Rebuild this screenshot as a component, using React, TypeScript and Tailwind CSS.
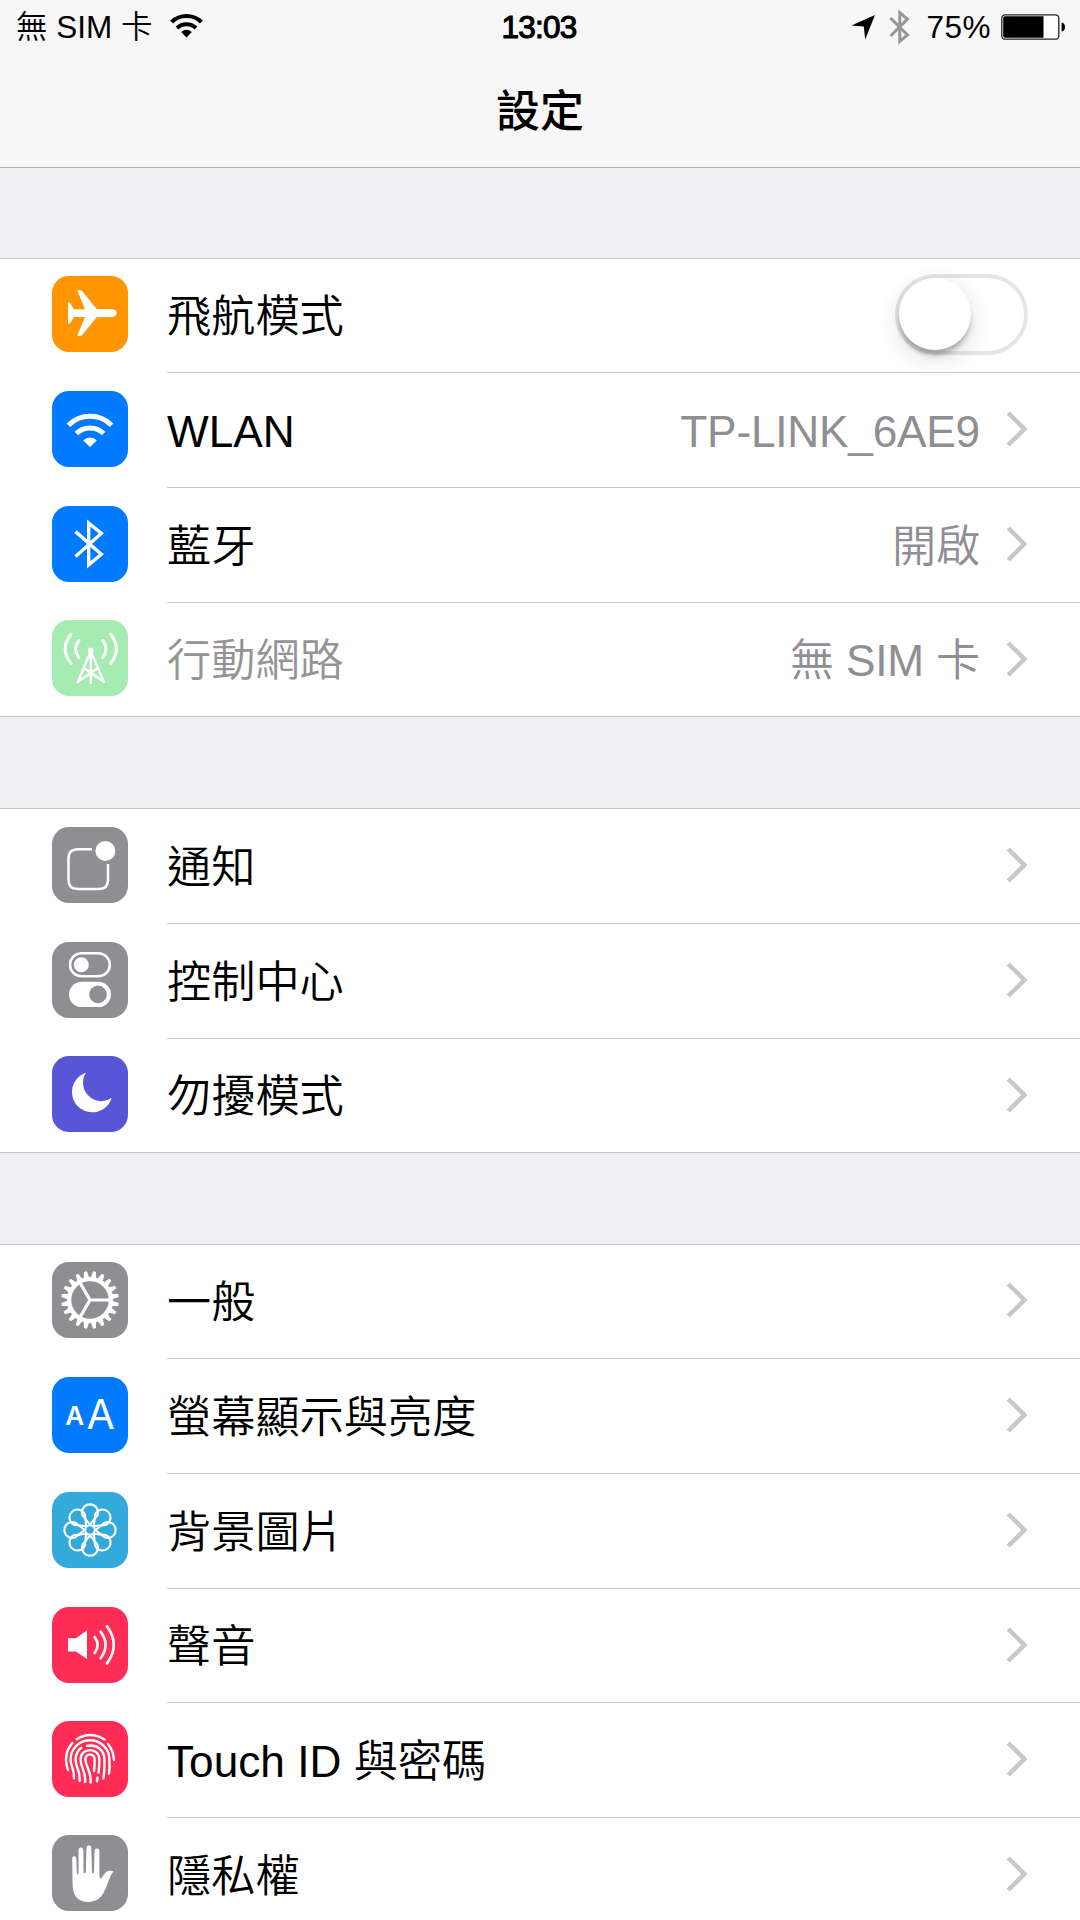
import React from 'react';
import { clsx } from 'clsx';

interface SettingsRow {
  id: string;
  label: string;
  iconBg: string;
  icon: React.ReactNode;
  value?: string;
  toggle?: boolean;
  disabled?: boolean;
}

const petals = [0, 45, 90, 135, 180, 225, 270, 315];
const teeth = Array.from({ length: 20 }, (_, i) => i * 18 + 9);

/* Row icons, all drawn on a 76x76 tile */

const AirplaneIcon = () => (
  <path
    fill="#fff"
    d="M16 26 L17.8 26.4 L22 33.2 H33 L25.3 14.6 Q27.5 13.6 29.7 14.6 L44.7 32.9 L60.7 33.2 Q64.7 34 64.7 37 Q64.7 40 60.7 40.9 L44.7 41.2 L29.7 59.5 Q27.5 60.4 25.3 59.5 L33 41 H22 L17.8 47.4 L16 47.8 Z"
  />
);

const WlanIcon = () => (
  <>
    <g fill="none" stroke="#fff" strokeWidth="5">
      <path d="M16.4 34.2 A30.5 30.5 0 0 1 59.6 34.2" />
      <path d="M24.3 42.6 A19.3 19.3 0 0 1 51.7 42.6" />
    </g>
    <path fill="#fff" d="M38 56 L31.2 49.4 A9.7 9.7 0 0 1 44.8 49.4 Z" />
  </>
);

const BluetoothIcon = () => (
  <path
    fill="none"
    stroke="#fff"
    strokeWidth="3.4"
    d="M23.5 25.6 L49.3 48.2 L36.7 58.8 V17 L49.3 27.4 L23.5 50.4"
  />
);

const CellularIcon = () => (
  <g fill="none" stroke="#fff" strokeWidth="3" strokeLinecap="round">
    <path d="M27 20.3 Q20.2 28.8 27 37.6" />
    <path d="M50.6 20.3 Q57.4 28.8 50.6 37.6" />
    <path d="M19 14.3 Q7.4 29 19 43.4" />
    <path d="M58.6 14.3 Q70.2 29 58.6 43.4" />
    <circle cx="38.8" cy="30.4" r="2.8" fill="#fff" stroke="none" />
    <g strokeWidth="2.4" strokeLinecap="butt">
      <path d="M38.8 31 L25.4 63" />
      <path d="M38.8 31 L52.2 63" />
      <path d="M38.8 31 V64" />
      <path d="M25.4 62 L45.4 48.2 M52.2 62 L32.2 48.2" />
    </g>
  </g>
);

const NotificationIcon = () => (
  <>
    <path
      fill="none"
      stroke="#fff"
      strokeWidth="2.5"
      d="M40 22.3 H26 Q16.5 22.3 16.5 31.5 V53 Q16.5 62 25.5 62 H47 Q56 62 56 53 V37"
    />
    <circle cx="53.4" cy="24" r="10" fill="#fff" />
  </>
);

const ControlCenterIcon = () => (
  <>
    <rect x="18" y="11.2" width="39.8" height="23" rx="11.5" fill="none" stroke="#fff" strokeWidth="2.6" />
    <circle cx="29.3" cy="22.8" r="7.5" fill="#fff" />
    <rect x="17" y="39.7" width="42" height="25.4" rx="12.7" fill="#fff" />
    <circle cx="46" cy="52.4" r="8.8" fill="#8e8e93" />
  </>
);

const MoonIcon = () => (
  <path fill="#fff" d="M34 16.7 A20.3 20.3 0 1 0 59.7 42 A18.4 18.4 0 0 1 34 16.7 Z" />
);

const GearIcon = () => (
  <>
    {teeth.map((deg) => (
      <path key={deg} transform={`rotate(${deg} 38 38)`} fill="#fff" d="M34.9 17.4 L36.6 9.2 H39.4 L41.1 17.4 Z" />
    ))}
    <g fill="none" stroke="#fff">
      <circle cx="38" cy="38" r="20.9" strokeWidth="4.4" />
      <path strokeWidth="3.2" d="M38 38 H58 M38 38 L28 20.7 M38 38 L28 55.3" />
    </g>
  </>
);

const DisplayIcon = () => (
  <g fill="#fff" fontFamily="Inter, 'Liberation Sans', sans-serif">
    <text x="13.2" y="48.3" fontSize="26" fontWeight="600" textLength="19" lengthAdjust="spacingAndGlyphs">A</text>
    <text x="34.5" y="52" fontSize="41" fontWeight="400" textLength="28.4" lengthAdjust="spacingAndGlyphs">A</text>
  </g>
);

const WallpaperIcon = () => (
  <g fill="none" stroke="#fff" strokeWidth="2.1">
    {petals.map((deg) => (
      <path
        key={deg}
        transform={`translate(38 38) rotate(${deg})`}
        d="M0 -5.4 L-7.4 -14.6 A8 8 0 1 1 7.4 -14.6 Z"
      />
    ))}
    <circle cx="38" cy="38" r="4.8" fill="#34aadc" />
  </g>
);

const SoundIcon = () => (
  <>
    <path fill="#fff" d="M16 31.2 H24 L35 23.2 V52 L24 44.4 H16 Z" />
    <g fill="none" stroke="#fff" strokeWidth="2.7" strokeLinecap="round">
      <path d="M42.6 30 Q48.8 38 42.6 46" />
      <path d="M48.6 24.6 Q58.6 38 48.6 51.2" />
      <path d="M55 19.4 Q68.6 38 55 56.4" />
    </g>
  </>
);

const TouchIdIcon = () => (
  <g fill="none" stroke="#fff" strokeWidth="2.4" strokeLinecap="round">
    <path d="M20.4 22 Q10.6 33 16 49" />
    <path d="M24.6 18.2 Q38.5 9.6 52.6 18.6" />
    <path d="M56 23 Q61.6 30 62 39" />
    <path d="M22 57.4 C22.4 46 18.6 46.5 18.6 38.5 A19.4 19.2 0 0 1 57.4 38.5 C57.6 43 58 47 57 52.6" />
    <path d="M27.6 60 C28.6 48 23.6 48.5 23.6 38.5 Q23.6 31 29.4 26.8" />
    <path d="M35 24.9 C45 22.6 52.4 29.5 52.4 38.5 C52.4 47 52.6 51 51.4 57.4" />
    <path d="M33 61 C34.2 49 28.6 48 28.6 38.5 C28.6 26 47.4 26 47.4 38.5 C47.4 43 47.2 46 46.6 51.6" />
    <path d="M38.6 61.6 C39.4 49 33.4 46 33.4 38.5 C33.4 31.8 42.6 31.8 42.6 38.5 C42.6 42 42.4 47 42 50" />
    <path d="M45.6 56.6 L45 60.2" />
  </g>
);

const HandIcon = () => (
  <path
    fill="#fff"
    d="M20.2 23.4 Q20.2 21.2 22.2 21.2 Q24.3 21.2 24.3 23.4 L24.9 39 Q25.6 39.8 26.5 39 V15 Q26.5 12.6 28.9 12.6 Q31.3 12.6 31.3 15 L31.6 37.6 Q32.6 38.8 33.8 37.6 L34.5 13 Q34.5 10.6 36.9 10.6 Q39.3 10.6 39.3 13 L40 37.6 Q41 38.8 42 37.6 L42.5 16 Q42.5 13.6 44.9 13.6 Q47.4 13.6 47.4 16 V41 Q47.4 43.8 49.4 43.6 Q53 36 57 35.7 Q60.4 35.4 61.4 36.4 Q58.6 39.6 57 44.4 Q52.6 57.6 49 61.6 Q44.4 67 36.6 67 Q21.6 67 20.6 51 Z"
  />
);

const sections: SettingsRow[][] = [
  [
    { id: 'airplane', label: '飛航模式', iconBg: 'bg-[#ff9500]', icon: <AirplaneIcon />, toggle: true },
    { id: 'wlan', label: 'WLAN', iconBg: 'bg-[#007aff]', icon: <WlanIcon />, value: 'TP-LINK_6AE9' },
    { id: 'bluetooth', label: '藍牙', iconBg: 'bg-[#007aff]', icon: <BluetoothIcon />, value: '開啟' },
    { id: 'cellular', label: '行動網路', iconBg: 'bg-[#a6ebb1]', icon: <CellularIcon />, value: '無 SIM 卡', disabled: true },
  ],
  [
    { id: 'notifications', label: '通知', iconBg: 'bg-[#8e8e93]', icon: <NotificationIcon /> },
    { id: 'control', label: '控制中心', iconBg: 'bg-[#8e8e93]', icon: <ControlCenterIcon /> },
    { id: 'dnd', label: '勿擾模式', iconBg: 'bg-[#5856d6]', icon: <MoonIcon /> },
  ],
  [
    { id: 'general', label: '一般', iconBg: 'bg-[#8e8e93]', icon: <GearIcon /> },
    { id: 'display', label: '螢幕顯示與亮度', iconBg: 'bg-[#007aff]', icon: <DisplayIcon /> },
    { id: 'wallpaper', label: '背景圖片', iconBg: 'bg-[#34aadc]', icon: <WallpaperIcon /> },
    { id: 'sound', label: '聲音', iconBg: 'bg-[#ff2d55]', icon: <SoundIcon /> },
    { id: 'touchid', label: 'Touch ID 與密碼', iconBg: 'bg-[#ff2d55]', icon: <TouchIdIcon /> },
    { id: 'privacy', label: '隱私權', iconBg: 'bg-[#8e8e93]', icon: <HandIcon /> },
  ],
];

// gap above each section
const gaps = ['h-[90.6px]', 'h-[92px]', 'h-[91.2px]'];

function StatusBar() {
  return (
    <div className="h-[54px] flex items-center justify-between pl-4 pr-[14px] text-[31.5px] leading-none">
      <div className="flex-1 flex items-center">
        <span className="pt-0.5">無 SIM 卡</span>
        <svg className="ml-[17px] -mt-1" width="33" height="25" viewBox="0 0 33 25">
          <g fill="none" stroke="#000" strokeWidth="4">
            <path d="M1.6 9 A21.5 21.5 0 0 1 31.4 9" />
            <path d="M7 15 A14 14 0 0 1 26 15" />
          </g>
          <path d="M16.5 24.4 L11.2 19 Q16.5 14.4 21.8 19 Z" />
        </svg>
      </div>
      <span className="pt-0.5 pr-1 font-normal tracking-[-0.8px] [-webkit-text-stroke:1.1px_#000]">13:03</span>
      <div className="flex-1 flex items-center justify-end">
        <svg width="24" height="25" viewBox="0 0 24 25">
          <path d="M24 0 L14.2 24.5 L12.8 11.6 L0.5 10.4 Z" />
        </svg>
        <svg className="ml-[14px]" width="22" height="36" viewBox="0 0 22 36">
          <path d="M1.5 9 L18.5 26 L10.8 32.4 V3.6 L18.5 10 L1.5 27" fill="none" stroke="#979799" strokeWidth="3" />
        </svg>
        <span className="ml-[15px] pt-0.5 tracking-[0.5px]">75%</span>
        <svg className="ml-[10px]" width="65" height="26" viewBox="0 0 65 26">
          <rect x="0.8" y="0.8" width="57" height="24.4" rx="3.5" fill="#fff" stroke="#222" strokeWidth="1.3" />
          <path d="M4 2.2 H42.5 V23.8 H4 Q2.2 23.8 2.2 22 V4 Q2.2 2.2 4 2.2 Z" />
          <path d="M60.6 8.5 Q64 9 64 13 Q64 17 60.6 17.5 Z" />
        </svg>
      </div>
    </div>
  );
}

function Toggle() {
  return (
    <div className="w-[133px] h-[81px] rounded-full border-4 border-[#e5e5e5] bg-white">
      <div className="w-[72px] h-[72px] rounded-full bg-white shadow-[0_6px_5px_-1px_rgba(0,0,0,0.25),0_8px_26px_rgba(0,0,0,0.14)]" />
    </div>
  );
}

function Chevron() {
  return (
    <svg className="ml-[26px]" width="22" height="36" viewBox="0 0 22 36">
      <path d="M2.2 2 L18.4 18 L2.2 34" fill="none" stroke="#c7c7cc" strokeWidth="4.4" />
    </svg>
  );
}

function Row({ row, last }: { row: SettingsRow; last: boolean }) {
  return (
    <div className={clsx('h-[114.7px] flex bg-white pl-[52px]', last && 'border-b border-[#c8c7cc]')}>
      <div className="w-[115px] flex items-center pb-[3px] shrink-0">
        <div className={clsx('w-[76px] h-[76px] rounded-[17px] overflow-hidden', row.iconBg)}>
          <svg width="76" height="76" viewBox="0 0 76 76">{row.icon}</svg>
        </div>
      </div>
      <div className={clsx('flex-1 flex items-center pr-[52px] pb-0.5', !last && 'border-b border-[#c8c7cc]')}>
        <span className={clsx('flex-1 pt-1.5 leading-none', row.disabled ? 'text-[#949494]' : 'text-black')}>{row.label}</span>
        {row.value && <span className="pt-1.5 leading-none tracking-[-0.2px] text-[#8e8e93]">{row.value}</span>}
        {row.toggle ? <Toggle /> : <Chevron />}
      </div>
    </div>
  );
}

export default function App() {
  return (
    <div className="w-[1080px] h-[1920px] overflow-hidden bg-[#efeff4] text-black font-[350] text-[44.2px] font-['Liberation_Sans','Noto_Sans_CJK_TC',sans-serif]">
      <header className="h-[168px] bg-[#f7f7f8] border-b border-[#b2b2b2]">
        <StatusBar />
        <h1 className="h-[112px] flex items-center justify-center pt-[3px] text-[44px] font-medium leading-none">設定</h1>
      </header>

      {sections.map((rows, i) => (
        <section key={i}>
          <div className={clsx('border-b border-[#c8c7cc]', gaps[i])} />
          {rows.map((row, j) => (
            <Row key={row.id} row={row} last={j === rows.length - 1} />
          ))}
        </section>
      ))}
    </div>
  );
}
